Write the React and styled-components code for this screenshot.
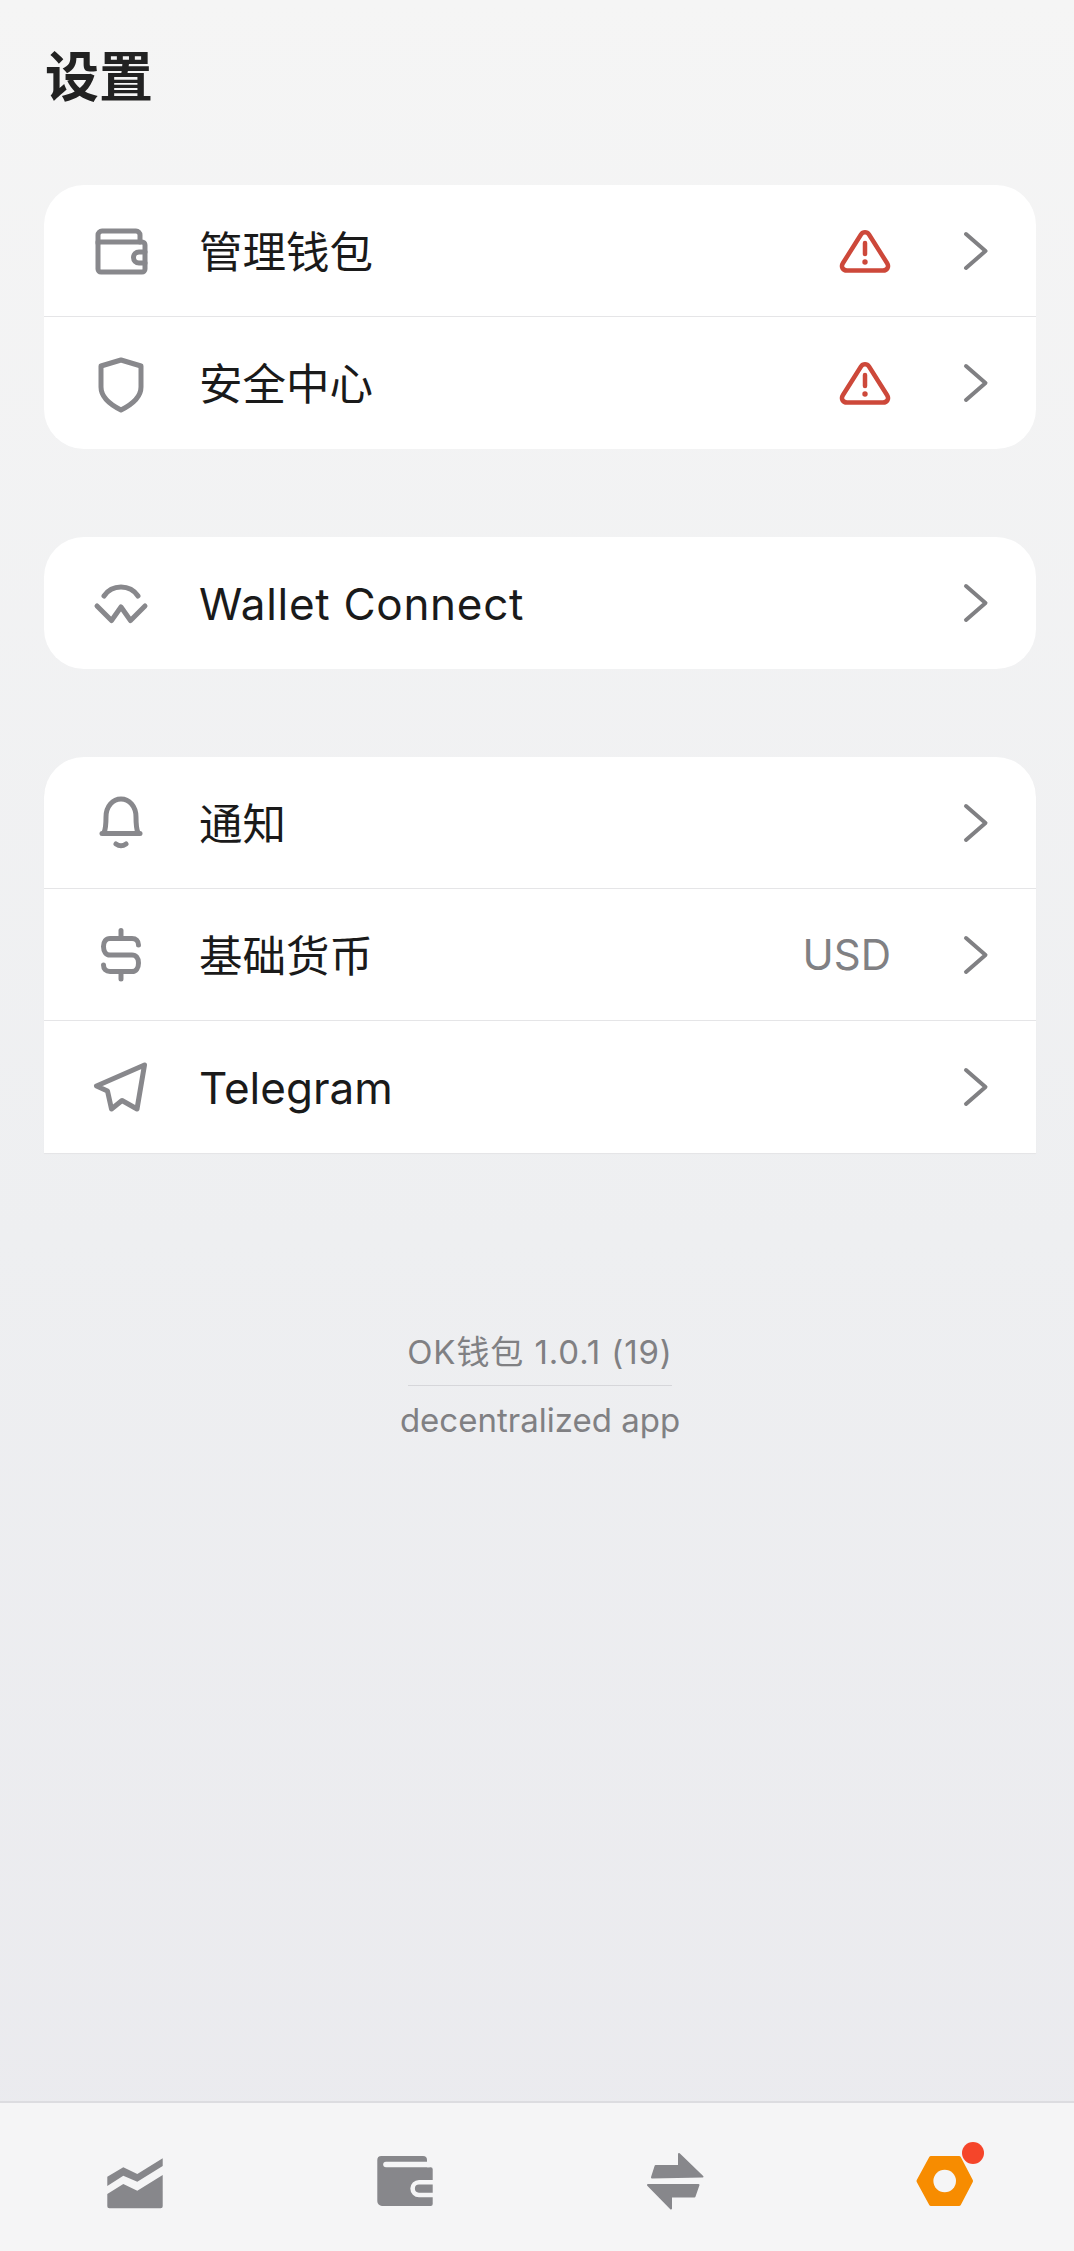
import React from "react";
import styled, { createGlobalStyle } from "styled-components";

const GlobalStyle = createGlobalStyle`
  * { box-sizing: border-box; }
  html, body { margin: 0; padding: 0; }
  body {
    font-family: Inter, "Noto Sans CJK SC", sans-serif;
    background: #eeeef0;
  }
`;

const WalletIcon = () => (
  <svg width="56" height="56" viewBox="0 0 56 56" fill="none" stroke="#88888c" strokeWidth="5" strokeLinejoin="round" strokeLinecap="round">
    <path d="M5 20V12a4 4 0 0 1 4-4h34a4 4 0 0 1 4 4v7" />
    <path d="M5 19h44a3 3 0 0 1 3 3v24a3 3 0 0 1-3 3H8a3 3 0 0 1-3-3V19" />
    <path d="M52 29h-6a5.500 5.500 0 0 0 0 11h6" />
  </svg>
);

const ShieldIcon = () => (
  <svg width="56" height="60" viewBox="0 0 56 60" fill="none" stroke="#88888c" strokeWidth="5" strokeLinejoin="round">
    <path d="M28 7L48 13V34C48 44 38 52 28 57C18 52 8 44 8 34V13Z" />
  </svg>
);

const ConnectIcon = () => (
  <svg width="56" height="56" viewBox="0 0 56 56" fill="none" stroke="#88888c" strokeWidth="5" strokeLinejoin="round" strokeLinecap="round">
    <path d="M11 21C19 9 37 9 45 21" />
    <path d="M4 31L18.500 45.500L28 32L37.500 45.500L52 31" />
  </svg>
);

const BellIcon = () => (
  <svg width="56" height="56" viewBox="0 0 56 56" fill="none" stroke="#88888c" strokeWidth="5" strokeLinejoin="round" strokeLinecap="round">
    <path d="M11 38C13 33 13 30 13 22C13 11 20 4 28 4C36 4 43 11 43 22C43 30 43 33 45 38" />
    <path d="M9 38.500H47" />
    <path d="M23 49Q28 52.500 33 49" />
  </svg>
);

const DollarIcon = () => (
  <svg width="56" height="56" viewBox="0 0 56 56" fill="none" stroke="#88888c" strokeWidth="5" strokeLinejoin="round" strokeLinecap="round">
    <path d="M45.500 18C45.500 14 43 11.500 39 11.500H17C13 11.500 10.500 14.500 10.500 19.500C10.500 24.500 13 28 17 28H39C43 28 45.500 31 45.500 36C45.500 41 43 44.500 39 44.500H17C13 44.500 10.500 42 10.500 38" />
    <path d="M28 3.500V11M28 45V52" />
  </svg>
);

const PlaneIcon = () => (
  <svg width="56" height="56" viewBox="0 0 56 56" fill="none" stroke="#88888c" strokeWidth="5" strokeLinejoin="round" strokeLinecap="round">
    <path d="M51.500 6L3.500 27L14.500 32L18.500 50L29 41.500L44 50Z" />
  </svg>
);

const WarningIcon = () => (
  <svg width="52" height="44" viewBox="0 0 52 44" fill="none" stroke="#cd483a" strokeWidth="4.500" strokeLinejoin="round" strokeLinecap="round">
    <path d="M22 5.500C24 2.500 28 2.500 30 5.500L48 34C50.500 38 48 41.500 44 41.500H8C4 41.500 1.500 38 4 34Z" />
    <path d="M26 14V25" />
    <circle cx="26" cy="33" r="2.700" fill="#cd483a" stroke="none" />
  </svg>
);

const Chevron = () => (
  <svg width="26" height="40" viewBox="0 0 26 40" fill="none" stroke="#808083" strokeWidth="4" strokeLinejoin="round" strokeLinecap="round">
    <path d="M3 3L22.500 20L3 37" />
  </svg>
);

const ChartTab = () => (
  <svg width="60" height="60" viewBox="0 0 60 60" fill="#87878b">
    <path d="M2.300 25.700L18.300 16.300L32.300 23L57.700 7.300V15L32.300 30.700L18.300 24.700L2.300 35Z" />
    <path d="M2.300 43L18.300 33L32.300 39.700L57.700 24V55.300a2 2 0 0 1-2 2H4.300a2 2 0 0 1-2-2Z" />
  </svg>
);

const WalletTab = () => (
  <svg width="60" height="60" viewBox="0 0 60 60" fill="#87878b">
    <path d="M2.300 9a4 4 0 0 1 4-4H48a4 4 0 0 1 4 4v7.300h3.700a2 2 0 0 1 2 2V53a2 2 0 0 1-2 2H7a4.700 4.700 0 0 1-4.700-4.700Z" />
    <path d="M11 13.500H54" stroke="#f5f5f6" strokeWidth="5.600" strokeLinecap="round" fill="none" />
    <path d="M58 31.200H44a6.400 6.400 0 0 0 0 12.800H58" stroke="#f5f5f6" strokeWidth="4.600" fill="none" />
  </svg>
);

const SwapTab = () => (
  <svg width="60" height="60" viewBox="0 0 60 60" fill="#87878b" stroke="#87878b" strokeWidth="2" strokeLinejoin="round">
    <path d="M34 3L57.500 25.600L7 26.400L10.600 15H34Z" />
    <path d="M3 34H53.500L49.500 45.500H26V57.500Z" />
  </svg>
);

const SettingsTab = () => (
  <svg width="60" height="60" viewBox="0 0 60 60">
    <path
      fill="#f78c00"
      stroke="#f78c00"
      strokeWidth="4"
      strokeLinejoin="round"
      d="M16 7H44L56 30L44 53H16L3.500 30Z"
    />
    <circle cx="29.700" cy="30" r="11.300" fill="#f5f5f6" />
  </svg>
);

const Page = styled.div`
  height: 100vh;
  display: flex;
  flex-direction: column;
  overflow: hidden;
  background: linear-gradient(180deg, #f5f5f5 0%, #eeeff1 55%, #eaeaee 100%);
`;

const Main = styled.main`
  flex: 1;
  padding: 43px 38px 0 44px;
`;

const Title = styled.h1`
  margin: 0 0 72px 1px;
  font-size: 54px;
  line-height: 70px;
  font-weight: 700;
  color: #222;
`;

const Card = styled.section`
  background: #fff;
  border-radius: ${(p) => (p.$flatBottom ? "40px 40px 0 0" : "40px")};
  overflow: hidden;
  margin-bottom: 88px;
  box-shadow: ${(p) => (p.$flatBottom ? "0 1px 1px #e4e4e6" : "none")};
`;

const Row = styled.div`
  height: 132px;
  display: flex;
  align-items: center;
  padding-left: 49px;
  padding-right: 47px;
  border-bottom: ${(p) => (p.$last ? "0" : "1px solid #e5e5e7")};
`;

const IconBox = styled.span`
  width: 56px;
  height: 56px;
  flex: none;
  display: flex;
  align-items: center;
  justify-content: center;
  margin-right: 50px;
`;

const Label = styled.span`
  flex: 1;
  padding-top: 2px;
  font-size: ${(p) => (p.$latin ? "44px" : "43.500px")};
  letter-spacing: ${(p) => p.$tracking || 0};
  line-height: 56px;
  color: #1a1a1a;
`;

const Trailing = styled.span`
  display: flex;
  align-items: center;
  margin-right: 72px;
  font-size: 42px;
  color: #808083;
`;

const About = styled.div`
  margin-top: 175px;
  display: flex;
  flex-direction: column;
  align-items: center;
  color: #808083;
  font-size: 33px;
  line-height: 48px;
`;

const Version = styled.div`
  width: 264px;
  display: flex;
  justify-content: center;
  white-space: nowrap;
  letter-spacing: 0.9px;
  padding-bottom: 9px;
  border-bottom: 1px solid #d6d6da;
  margin-bottom: 10px;
`;

const TabBar = styled.nav`
  flex: none;
  display: flex;
  gap: 210px;
  padding: 48px 0 40px 105px;
  background: #f5f5f6;
  border-top: 2px solid #dcdce0;
`;

const TabIcon = styled.span`
  position: relative;
  display: block;
  width: 60px;
  height: 60px;
`;

const Badge = styled.span`
  position: absolute;
  top: -9px;
  left: 47px;
  width: 22px;
  height: 22px;
  border-radius: 50%;
  background: #f5452a;
`;

const groups = [
  [
    { icon: <WalletIcon />, label: "管理钱包", warn: true },
    { icon: <ShieldIcon />, label: "安全中心", warn: true },
  ],
  [{ icon: <ConnectIcon />, label: "Wallet Connect", latin: true, tracking: "0.7px" }],
  [
    { icon: <BellIcon />, label: "通知" },
    { icon: <DollarIcon />, label: "基础货币", value: "USD" },
    { icon: <PlaneIcon />, label: "Telegram", latin: true },
  ],
];

const App = () => (
  <>
    <GlobalStyle />
    <Page>
      <Main>
        <Title>设置</Title>
        {groups.map((rows, g) => (
          <Card key={g} $flatBottom={g === 2}>
            {rows.map((row, i) => (
              <Row key={row.label} $last={i === rows.length - 1}>
                <IconBox>{row.icon}</IconBox>
                <Label $latin={row.latin} $tracking={row.tracking}>
                  {row.label}
                </Label>
                {row.warn && (
                  <Trailing>
                    <WarningIcon />
                  </Trailing>
                )}
                {row.value && <Trailing>{row.value}</Trailing>}
                <Chevron />
              </Row>
            ))}
          </Card>
        ))}
        <About>
          <Version>OK钱包 1.0.1 (19)</Version>
          <div>decentralized app</div>
        </About>
      </Main>
      <TabBar>
        <TabIcon>
          <ChartTab />
        </TabIcon>
        <TabIcon>
          <WalletTab />
        </TabIcon>
        <TabIcon>
          <SwapTab />
        </TabIcon>
        <TabIcon>
          <SettingsTab />
          <Badge />
        </TabIcon>
      </TabBar>
    </Page>
  </>
);

export default App;
